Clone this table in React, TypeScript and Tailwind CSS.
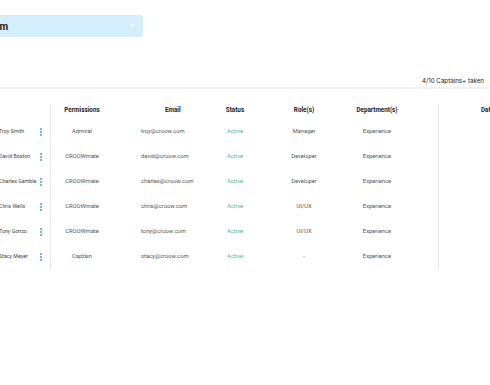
import React from "react";

const rows = [
  { name: "Troy Smith", perm: "Admiral", email: "troy@croow.com", role: "Manager" },
  { name: "David Boston", perm: "CROOWmate", email: "david@croow.com", role: "Developer" },
  { name: "Charles Gamble", perm: "CROOWmate", email: "charles@croow.com", role: "Developer" },
  { name: "Chris Wells", perm: "CROOWmate", email: "chris@croow.com", role: "UI/UX" },
  { name: "Tony Gonzo", perm: "CROOWmate", email: "tony@croow.com", role: "UI/UX" },
  { name: "Stacy Meyer", perm: "Captain", email: "stacy@croow.com", role: "-" },
];

function Kebab() {
  return (
    <div className="flex flex-col gap-[1px]">
      <span className="block w-[2px] h-[2px] rounded-full bg-[#3ba0f0]" />
      <span className="block w-[2px] h-[2px] rounded-full bg-[#3ba0f0]" />
      <span className="block w-[2px] h-[2px] rounded-full bg-[#3ba0f0]" />
    </div>
  );
}

export default function App() {
  const head = "font-bold text-[6.3px] text-[#222] [font-family:'Liberation_Sans_Narrow','Roboto',sans-serif]";
  const body = "text-[5.8px] text-[#555] [font-family:'Roboto',sans-serif]";
  return (
    <div className="w-[490px] h-[385px] bg-white overflow-hidden relative">
      <div className="pt-[15px]">
        <div className="-ml-[27px] w-[170px] h-[22px] bg-[#d4eeff] rounded-[2px] flex items-center justify-between pl-[10px] pr-[8px]">
          <span className="font-bold text-[10px] text-[#222] [font-family:'Roboto',sans-serif]">Team</span>
          <svg width="5" height="4" viewBox="0 0 5 4"><path d="M0 0h5L2.5 3.5z" fill="#ffffff" /></svg>
        </div>
      </div>
      <div className="mt-[39px] h-[10px] flex items-center justify-end pr-[6px]">
        <span className="text-[6.2px] text-[#222] [font-family:'Inter',sans-serif]">4/10 Captains+ taken</span>
      </div>
      <div className="mt-[1px] h-[2px] bg-[#f1f1f1]" />
      <div className="mt-[15px] flex pb-[12px]">
        <div className="w-[51px] border-r border-[#e6e6e6] shrink-0 pt-[2px]">
          <div className="h-[9px]" />
          <div className="mt-[4px]">
            {rows.map((r) => (
              <div key={r.name} className="h-[25px] flex items-center justify-between -ml-[1px] pr-[8px]">
                <span className="text-[5.3px] text-[#444] [font-family:'Roboto',sans-serif] whitespace-nowrap">{r.name}</span>
                <Kebab />
              </div>
            ))}
          </div>
        </div>
        <div className="w-[388px] shrink-0 border-r border-[#e6e6e6] pt-[2px]">
          <div className="h-[9px] flex items-center">
            <div className={"w-[62px] text-center " + head}>Permissions</div>
            <div className={"w-[99px] pl-[52px] " + head}>Email</div>
            <div className={"w-[46px] text-center " + head}>Status</div>
            <div className={"w-[92px] text-center " + head}>Role(s)</div>
            <div className={"w-[54px] text-center " + head}>Department(s)</div>
          </div>
          <div className="mt-[4px]">
            {rows.map((r) => (
              <div key={r.name} className="h-[25px] flex items-center">
                <div className={"w-[62px] text-center " + body}>{r.perm}</div>
                <div className={"w-[99px] pl-[28px] " + body}>{r.email}</div>
                <div className={"w-[46px] text-center " + body + " !text-[#3fc28f]"}>Active</div>
                <div className={"w-[92px] text-center " + body}>{r.role}</div>
                <div className={"w-[54px] text-center " + body}>Experience</div>
              </div>
            ))}
          </div>
        </div>
        <div className="flex-1 pt-[2px]">
          <div className={"h-[9px] flex items-center pl-[42px] whitespace-nowrap " + head}>Date Joined</div>
        </div>
      </div>
    </div>
  );
}
